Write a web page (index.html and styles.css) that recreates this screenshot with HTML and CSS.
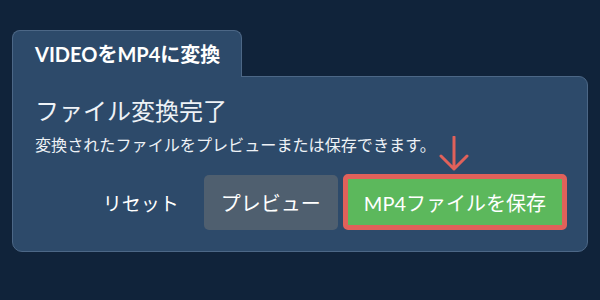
FILE: index.html
```html
<!DOCTYPE html>
<html lang="ja">
<head>
  <meta charset="UTF-8">
  <meta name="viewport" content="width=device-width, initial-scale=1.0">
  <title>VIDEOをMP4に変換</title>
  <link rel="stylesheet" href="styles.css">
</head>
<body>

  <div class="panel">
    <div class="tab">VIDEOをMP4に変換</div>

    <div class="card">
      <h1>ファイル変換完了</h1>
      <p class="note">変換されたファイルをプレビューまたは保存できます。</p>

      <div class="actions">
        <button type="button" class="btn btn-link">リセット</button>
        <button type="button" class="btn btn-grey">プレビュー</button>
        <div class="save-wrap">
          <!-- pointer arrow over the save button -->
          <svg class="arrow" width="30" height="36" viewBox="0 0 30 36">
            <path d="M15 1 V33 M2 20 L15 33 L28 20" fill="none" stroke="#e0615a" stroke-width="3" stroke-linecap="round" stroke-linejoin="round"/>
          </svg>
          <button type="button" class="btn btn-save">MP4ファイルを保存</button>
        </div>
      </div>
    </div>
  </div>

</body>
</html>
```

FILE: styles.css
```css
body {
  font-family: Lato, "Noto Sans CJK JP", sans-serif;
  background-color: #10233a;
  margin: 0;
  padding: 30px 12px 0;
  color: #f2f5f8;
}
.panel {
  width: 576px;
}
.tab {
  position: relative;
  z-index: 1;
  display: inline-block;
  height: 46px;
  line-height: 46px;
  padding: 0 21px 0 22px;
  margin-bottom: -1px;
  background-color: #2d4a6a;
  border: 1px solid #4c6786;
  border-bottom: none;
  border-radius: 8px 8px 0 0;
  font-size: 20px;
  font-weight: bold;
  color: #fff;
}
.card {
  background-color: #2d4a6a;
  border: 1px solid #4c6786;
  border-radius: 0 9px 10px 10px;
  padding: 18px 20px 21px 22px;
}
h1 {
  margin: 0 0 6px;
  font-size: 24px;
  line-height: 32px;
  font-weight: normal;
  color: #eef2f6;
}
.note {
  margin: 0 0 17px;
  font-size: 16.1px;
  line-height: 24px;
  color: #eef2f6;
}
.actions {
  display: flex;
  justify-content: flex-end;
  align-items: center;
  gap: 5px;
}
.btn {
  font-family: Lato, "Noto Sans CJK JP", sans-serif;
  font-size: 20px;
  height: 56px;
  padding: 0 17px;
  border: none;
  border-radius: 5px;
  color: #fff;
  cursor: pointer;
}
.btn-link {
  background: none;
  font-size: 19px;
  margin-right: 3px;
}
.btn-grey {
  background-color: #4f5f6f;
  height: 55px;
}
.save-wrap {
  position: relative;
}
.btn-save {
  display: block;
  background-color: #5cb85c;
  border: 5px solid #e0615a;
  padding: 0 16px;
}
.arrow {
  position: absolute;
  left: 96px;
  top: -38px;
}
```
